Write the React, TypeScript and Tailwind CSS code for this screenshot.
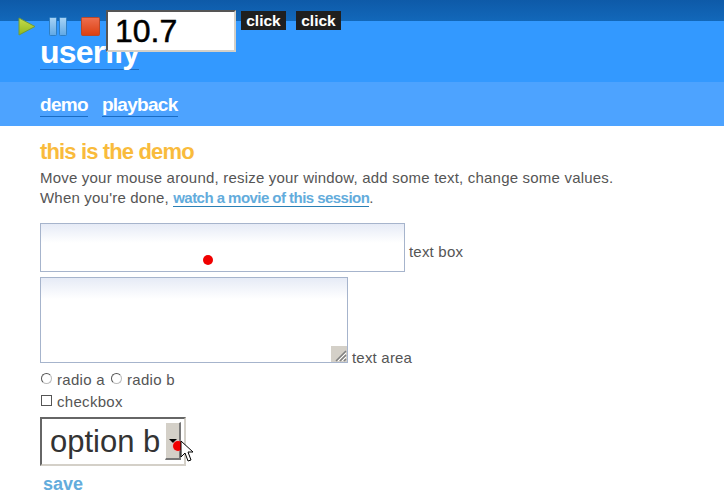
import React from 'react';

const sans = { fontFamily: '"Liberation Sans", Arial, sans-serif' };

function PlayerBar() {
  return (
    <div className="absolute left-0 top-0 w-full h-[52px]">
      <div className="absolute left-[18px] top-[17px] flex items-start gap-[13px]">
        <svg width="18" height="19" viewBox="0 0 18 19">
          <defs>
            <linearGradient id="play" x1="0" y1="0" x2="0" y2="1">
              <stop offset="0" stopColor="#c8dc4a" />
              <stop offset="1" stopColor="#8fb820" />
            </linearGradient>
          </defs>
          <path d="M1 1 L17 9.5 L1 18 Z" fill="url(#play)" stroke="#6f9a3c" strokeWidth="1" />
        </svg>
        <svg width="18" height="19" viewBox="0 0 18 19">
          <defs>
            <linearGradient id="pause" x1="0" y1="0" x2="0" y2="1">
              <stop offset="0" stopColor="#a9d4f5" />
              <stop offset="1" stopColor="#5fa8e6" />
            </linearGradient>
          </defs>
          <rect x="0.5" y="0.5" width="7" height="18" rx="1" fill="url(#pause)" stroke="#2f7fc4" />
          <rect x="10.5" y="0.5" width="7" height="18" rx="1" fill="url(#pause)" stroke="#2f7fc4" />
        </svg>
        <svg className="ml-[1px]" width="19" height="19" viewBox="0 0 19 19">
          <defs>
            <linearGradient id="stop" x1="0" y1="0" x2="0" y2="1">
              <stop offset="0" stopColor="#ee6f4f" />
              <stop offset="1" stopColor="#dc3f10" />
            </linearGradient>
          </defs>
          <rect x="0.5" y="0.5" width="18" height="18" rx="1" fill="url(#stop)" stroke="#b9482a" />
        </svg>
      </div>
      <div
        className="absolute left-[106px] top-[10px] w-[130px] h-[42px] bg-white border-2 border-t-[#555] border-l-[#555] border-r-[#d4d0c8] border-b-[#d4d0c8] pl-[7px] text-black text-[32px] leading-[38px] [-webkit-text-stroke:0.5px_black]"
        style={sans}
      >
        10.7
      </div>
      <div className="absolute left-[241px] top-[11px] flex gap-[10px]">
        <div className="w-[45px] h-[19px] bg-[#1f1f1f] text-white font-bold text-[15.5px] leading-[19px] text-center" style={sans}>click</div>
        <div className="w-[45px] h-[19px] bg-[#1f1f1f] text-white font-bold text-[15.5px] leading-[19px] text-center" style={sans}>click</div>
      </div>
    </div>
  );
}

function Radio({ label }: { label: string }) {
  return (
    <span className="inline-flex items-center">
      <span className="w-[11px] h-[11px] rounded-full border border-t-[#555] border-l-[#555] border-r-[#bbb] border-b-[#bbb] bg-white ml-[1px] mr-[5px] -mt-[3px]" />
      <span>{label}</span>
    </span>
  );
}

export default function App() {
  return (
    <div className="relative w-[724px] h-[502px] overflow-hidden bg-white text-[#555]" style={sans}>
      <div className="h-[21px] bg-gradient-to-b from-[#0e5aa8] to-[#1268ba]" />
      <div className="h-[61px] bg-[#3399ff] pl-[40px] pt-[14px]">
        <span className="inline-block text-white font-bold text-[32px] leading-[34px] tracking-[-0.8px] border-b border-[#1a6cc4]">userfly</span>
      </div>
      <div className="h-[44px] bg-[#4da3ff] pl-[40px] pt-[12px] flex gap-[14px] items-start">
        <span className="text-white font-bold text-[19px] leading-[22px] tracking-[-0.7px] border-b border-[#1a6cc4]">demo</span>
        <span className="text-white font-bold text-[19px] leading-[22px] tracking-[-0.7px] border-b border-[#1a6cc4]">playback</span>
      </div>

      <div className="pl-[40px] pt-[13px]">
        <h1 className="text-[#f9bb3c] font-bold text-[22px] leading-[26px] tracking-[-0.86px]">this is the demo</h1>
        <p className="text-[15px] leading-[20px] mt-[3px] tracking-[0.2px]">
          Move your mouse around, resize your window, add some text, change some values.
          <br />
          When you're done,{' '}
          <span className="text-[#63acdc] font-bold tracking-[-0.54px] border-b border-[#2a7fb5]">watch a movie of this session</span>.
        </p>

        <div className="flex items-center mt-[15px] h-[49px]">
          <div className="w-[365px] h-[49px] border border-[#a6b4cc] bg-gradient-to-b from-[#e6ebf6] to-white to-40%" />
          <span className="ml-[4px] mt-[10px] text-[15px] tracking-[0.2px]">text box</span>
        </div>

        <div className="flex items-end mt-[5px] h-[86px]">
          <div className="relative w-[308px] h-[86px] border border-[#a6b4cc] bg-gradient-to-b from-[#e6ebf6] to-white to-25%">
            <svg className="absolute right-0 bottom-0" width="16" height="16" viewBox="0 0 16 16">
              <rect width="16" height="16" fill="#d4d0c8" />
              <path d="M15 5 L5 15 M15 9 L9 15 M15 13 L13 15" stroke="#808080" strokeWidth="1.5" />
              <path d="M15 7 L7 15 M15 11 L11 15" stroke="#ffffff" strokeWidth="1" />
            </svg>
          </div>
          <span className="ml-[4px] text-[15px] tracking-[0.2px] leading-[18px] -mb-[4px]">text area</span>
        </div>

        <div className="flex items-center gap-[5px] mt-[8px] h-[18px] text-[15px] tracking-[0.3px]">
          <Radio label="radio a" />
          <Radio label="radio b" />
        </div>

        <div className="flex items-center mt-[4px] h-[18px] text-[15px] tracking-[0.3px]">
          <span className="w-[11px] h-[11px] border border-[#555] bg-white ml-[1px] mr-[5px] -mt-[3px]" />
          <span>checkbox</span>
        </div>

        <div className="relative mt-[6px] w-[146px] h-[49px] border-2 border-t-[#666] border-l-[#666] border-r-[#d4d0c8] border-b-[#d4d0c8] bg-white">
          <span className="absolute left-[8px] top-[5px] text-[31px] leading-[36px] text-[#333]">option b</span>
          <div className="absolute right-[3px] top-[3px] w-[16px] h-[38px] bg-[#d4d0c8] border-r-2 border-b-2 border-[#777] border-t border-l border-t-white border-l-white flex items-center justify-center">
            <span className="w-0 h-0 border-x-[4px] border-x-transparent border-t-[4px] border-t-black" />
          </div>
        </div>

        <div className="pl-[3px] mt-[7px] text-[#63acdc] font-bold text-[18px] leading-[22px]">save</div>
      </div>

      <PlayerBar />

      {/* recorded mouse position */}
      <div className="absolute left-[203px] top-[255px] w-[10px] h-[10px] rounded-full bg-[#f00000]" />
      <div className="absolute left-[173px] top-[441px] w-[10px] h-[10px] rounded-full bg-[#f00000] shadow-[0_0_2px_#f9a0a0]" />
      <svg className="absolute left-[180px] top-[440px]" width="14" height="24" viewBox="0 0 14 24">
        <path d="M1 1 L1 17 L5 13 L8 21 L11 20 L8 12 L13 12 Z" fill="#fff" stroke="#000" strokeWidth="1" />
      </svg>
    </div>
  );
}
